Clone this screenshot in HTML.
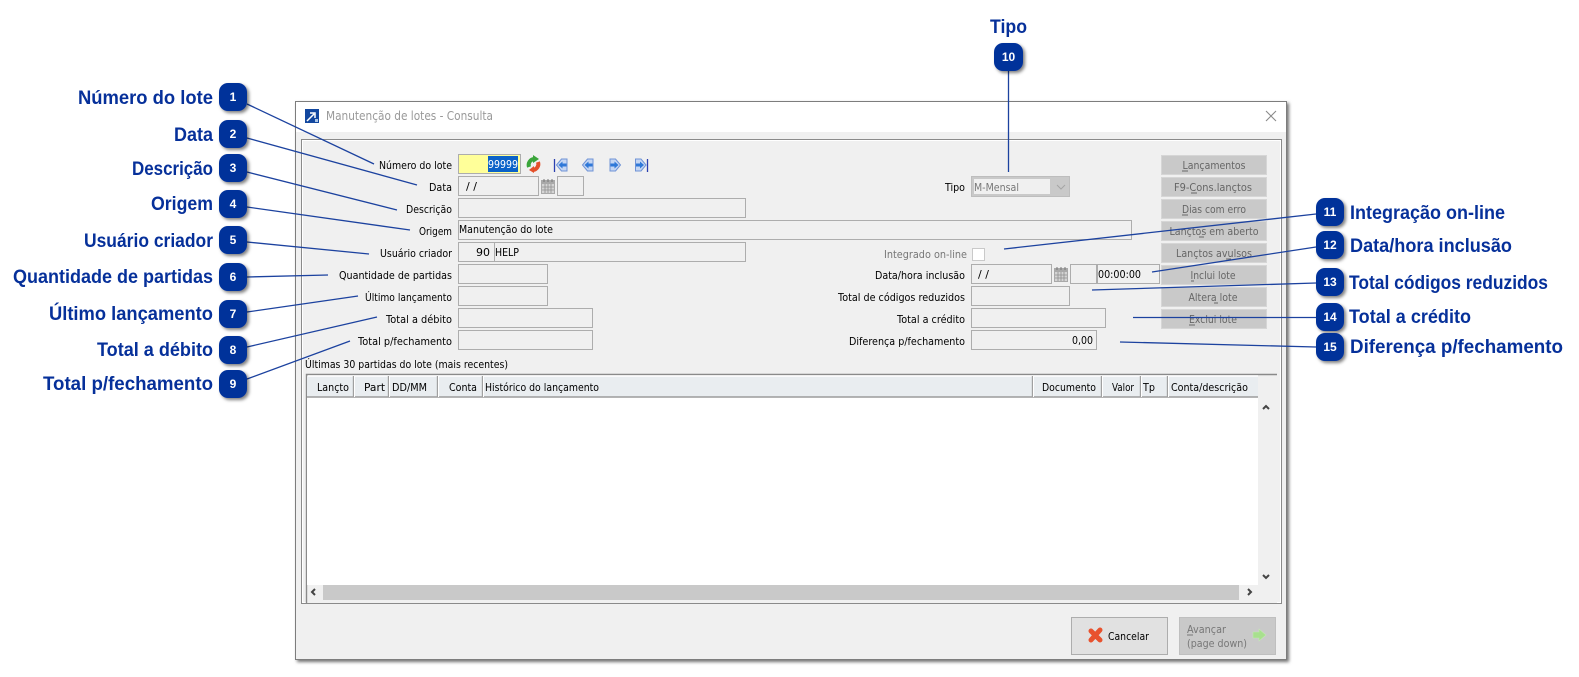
<!DOCTYPE html>
<html><head><meta charset="utf-8"><title>Manutenção de lotes</title>
<style>
html,body{margin:0;padding:0;background:#fff;width:1579px;height:677px;overflow:hidden}
svg{display:block}
.h{font:bold 19px "Liberation Sans",sans-serif;fill:#06309a}
.u{font:11px "DejaVu Sans","Liberation Sans",sans-serif;fill:#000}
.g{fill:#777}
.n{font:bold 12px "Liberation Sans",sans-serif;fill:#fff;text-anchor:middle}
.f{fill:#f0f0f0;stroke:#adadad;stroke-width:1}
.b{fill:#c9c9c9;stroke:#d6d6d6;stroke-width:1}
.l{stroke:#1c429f;stroke-width:1.3;fill:none}
.hs{stroke:#a0a0a0;stroke-width:1.4}
.ao{fill:#c5d6f3;stroke:#6f93d6;stroke-width:1}
.ai{fill:#2f78d8}
</style></head><body>
<svg xmlns="http://www.w3.org/2000/svg" width="1579" height="677" viewBox="0 0 1579 677">
<defs>
<filter id="s" x="-30%" y="-30%" width="170%" height="170%"><feDropShadow dx="2" dy="2" stdDeviation="1.6" flood-color="#000" flood-opacity=".5"/></filter>
<filter id="w" x="-2%" y="-2%" width="104%" height="104%"><feDropShadow dx="2" dy="2" stdDeviation="1.5" flood-color="#000" flood-opacity=".55"/></filter>
<g id="cal"><rect x="0" y="1" width="14" height="14" fill="#a9a9a9"/><rect x="1" y="5" width="12" height="9" fill="#d4d4d4"/><path d="M1 8h12M1 11h12M4 5v9M7 5v9M10 5v9" stroke="#8f8f8f" stroke-width=".8"/><path d="M3 0v3M7 0v3M11 0v3" stroke="#777"/></g>
</defs>

<!-- window -->
<rect x="295.500" y="101.500" width="991" height="558" fill="#f0f0f0" stroke="#7d7d7d" filter="url(#w)"/>
<rect x="296" y="102" width="990" height="30" fill="#fff"/>
<rect x="305" y="109" width="14" height="14" fill="#12479f"/>
<path d="M307 121l7-7M310 113h5v5" stroke="#fff" stroke-width="1.5" fill="none"/>
<path d="M315 119h3v3h-3z" fill="#a9c4e6"/>
<text class="u" x="326" y="120" textLength="167" lengthAdjust="spacingAndGlyphs" style="fill:#999;font-size:12px">Manutenção de lotes - Consulta</text>
<path d="M1266 111l10 10M1276 111l-10 10" stroke="#8a8a8a" stroke-width="1.1"/>

<!-- panel -->
<rect x="301.500" y="139.500" width="980" height="464" fill="#f0f0f0" stroke="#8a8a8a"/>
<rect x="302.500" y="140.500" width="978" height="462" fill="none" stroke="#fff"/>

<!-- left labels -->
<g class="u" text-anchor="end">
<text x="452" y="169" textLength="73" lengthAdjust="spacingAndGlyphs">Número do lote</text>
<text x="452" y="191" textLength="23" lengthAdjust="spacingAndGlyphs">Data</text>
<text x="452" y="213" textLength="46" lengthAdjust="spacingAndGlyphs">Descrição</text>
<text x="452" y="235" textLength="33" lengthAdjust="spacingAndGlyphs">Origem</text>
<text x="452" y="257" textLength="72" lengthAdjust="spacingAndGlyphs">Usuário criador</text>
<text x="452" y="279" textLength="113" lengthAdjust="spacingAndGlyphs">Quantidade de partidas</text>
<text x="452" y="301" textLength="87" lengthAdjust="spacingAndGlyphs">Último lançamento</text>
<text x="452" y="323" textLength="66" lengthAdjust="spacingAndGlyphs">Total a débito</text>
<text x="452" y="345" textLength="94" lengthAdjust="spacingAndGlyphs">Total p/fechamento</text>
</g>

<!-- left fields -->
<rect x="458.500" y="154.500" width="62" height="19" fill="#ffff99" stroke="#adadad"/>
<rect x="488" y="156" width="30" height="16" fill="#0a62c8"/>
<text class="u" x="488" y="168" textLength="30" lengthAdjust="spacingAndGlyphs" style="fill:#fff">99999</text>
<rect class="f" x="458.500" y="176.500" width="80" height="19"/>
<text class="u" x="466" y="190">/ /</text>
<use href="#cal" x="541" y="179"/>
<rect class="f" x="557.500" y="176.500" width="26" height="19"/>
<rect class="f" x="458.500" y="198.500" width="287" height="19"/>
<rect class="f" x="458.500" y="220.500" width="673" height="19"/>
<text class="u" x="459" y="233" textLength="94" lengthAdjust="spacingAndGlyphs">Manutenção do lote</text>
<rect class="f" x="458.500" y="242.500" width="36" height="19"/>
<rect class="f" x="494.500" y="242.500" width="251" height="19"/>
<text class="u" x="490" y="256" text-anchor="end">90</text>
<text class="u" x="495" y="256" textLength="24" lengthAdjust="spacingAndGlyphs">HELP</text>
<rect class="f" x="458.500" y="264.500" width="89" height="19"/>
<rect class="f" x="458.500" y="286.500" width="89" height="19"/>
<rect class="f" x="458.500" y="308.500" width="134" height="19"/>
<rect class="f" x="458.500" y="330.500" width="134" height="19"/>

<!-- nav icons -->
<g>
<path d="M529 167a6 6 0 0 1 5-8" fill="none" stroke="#3aa53a" stroke-width="4"/>
<path d="M533 155l6 4-6 4z" fill="#3aa53a"/>
<path d="M538 162a6 6 0 0 1-5 8" fill="none" stroke="#e4502a" stroke-width="4"/>
<path d="M534 166l-5 4 5 3z" fill="#e4502a"/>
<path d="M554.500 159v13" stroke="#2a3fb0" stroke-width="1.3"/>
<path class="ao" d="M556.500 165l5-6h5.500v12h-5.500z"/><path class="ai" d="M558.500 165l4-3.500v2h4v3h-4v2z"/>
<path class="ao" d="M582.500 165l5-6h5.500v12h-5.500z"/><path class="ai" d="M584.500 165l4-3.500v2h4v3h-4v2z"/>
<path class="ao" d="M620.500 165l-5-6h-5.500v12h5.500z"/><path class="ai" d="M618.500 165l-4-3.500v2h-4v3h4v2z"/>
<path class="ao" d="M646 165l-5-6h-5.500v12h5.500z"/><path class="ai" d="M644 165l-4-3.500v2h-4v3h4v2z"/>
<path d="M647.500 159v13" stroke="#2a3fb0" stroke-width="1.3"/>
</g>

<!-- right labels -->
<g class="u" text-anchor="end">
<text x="965" y="191" textLength="20" lengthAdjust="spacingAndGlyphs">Tipo</text>
<text x="967" y="258" textLength="83" lengthAdjust="spacingAndGlyphs" class="g">Integrado on-line</text>
<text x="965" y="279" textLength="90" lengthAdjust="spacingAndGlyphs">Data/hora inclusão</text>
<text x="965" y="301" textLength="127" lengthAdjust="spacingAndGlyphs">Total de códigos reduzidos</text>
<text x="965" y="323" textLength="68" lengthAdjust="spacingAndGlyphs">Total a crédito</text>
<text x="965" y="345" textLength="116" lengthAdjust="spacingAndGlyphs">Diferença p/fechamento</text>
</g>

<!-- right fields -->
<rect x="971.500" y="176.500" width="98" height="20" fill="#c9c9c9" stroke="#bdbdbd"/>
<rect x="974" y="179" width="76" height="15" fill="#f0f0f0"/>
<text class="u g" x="974" y="191" textLength="45" lengthAdjust="spacingAndGlyphs">M-Mensal</text>
<path d="M1057 185l4 4 4-4" fill="none" stroke="#a5a5a5"/>
<rect x="972.500" y="248.500" width="12" height="12" fill="#fff" stroke="#c9c9c9"/>
<rect class="f" x="971.500" y="264.500" width="80" height="19"/>
<text class="u" x="978" y="278">/ /</text>
<use href="#cal" x="1054" y="267"/>
<rect class="f" x="1070.500" y="264.500" width="26" height="19"/>
<rect class="f" x="1097.500" y="264.500" width="62" height="19"/>
<text class="u" x="1098" y="278" textLength="43" lengthAdjust="spacingAndGlyphs">00:00:00</text>
<rect class="f" x="971.500" y="286.500" width="98" height="19"/>
<rect class="f" x="971.500" y="308.500" width="134" height="19"/>
<rect class="f" x="971.500" y="330.500" width="125" height="19"/>
<text class="u" x="1093" y="344" text-anchor="end" textLength="21" lengthAdjust="spacingAndGlyphs">0,00</text>

<!-- buttons -->
<rect class="b" x="1161.500" y="155.500" width="105" height="19"/>
<rect class="b" x="1161.500" y="177.500" width="105" height="19"/>
<rect class="b" x="1161.500" y="199.500" width="105" height="19"/>
<rect class="b" x="1161.500" y="221.500" width="105" height="19"/>
<rect class="b" x="1161.500" y="243.500" width="105" height="19"/>
<rect class="b" x="1161.500" y="265.500" width="105" height="19"/>
<rect class="b" x="1161.500" y="287.500" width="105" height="19"/>
<rect class="b" x="1161.500" y="309.500" width="105" height="19"/>
<g class="u" text-anchor="middle">
<text style="fill:#666" x="1214" y="169" textLength="63" lengthAdjust="spacingAndGlyphs">Lançamentos</text>
<text style="fill:#666" x="1213" y="191" textLength="78" lengthAdjust="spacingAndGlyphs">F9-Cons.lançtos</text>
<text style="fill:#666" x="1214" y="213" textLength="64" lengthAdjust="spacingAndGlyphs">Dias com erro</text>
<text style="fill:#666" x="1214" y="235" textLength="89" lengthAdjust="spacingAndGlyphs">Lançtos em aberto</text>
<text style="fill:#666" x="1214" y="257" textLength="76" lengthAdjust="spacingAndGlyphs">Lançtos avulsos</text>
<text style="fill:#666" x="1213" y="279" textLength="45" lengthAdjust="spacingAndGlyphs">Inclui lote</text>
<text style="fill:#666" x="1213" y="301" textLength="49" lengthAdjust="spacingAndGlyphs">Altera lote</text>
<text style="fill:#666" x="1213" y="323" textLength="48" lengthAdjust="spacingAndGlyphs">Exclui lote</text>
</g>
<path d="M1182 171h6M1191 193h6M1182 215h6M1199 237h5M1226 259h5M1191 281h3M1214 303h4M1189 325h6" stroke="#666" stroke-width="1"/>

<!-- table -->
<text class="u" x="305" y="368" textLength="203" lengthAdjust="spacingAndGlyphs">Últimas 30 partidas do lote (mais recentes)</text>
<rect x="306" y="374" width="971" height="229" fill="#f0f0f0"/>
<path d="M306.500 603V374.500H1277" fill="none" stroke="#8a8a8a" stroke-width="1.4"/>
<rect x="307" y="397" width="951" height="188" fill="#fff"/>
<rect x="307" y="376" width="951" height="21" fill="#e9edf0"/>
<path d="M308 376h950" stroke="#fff" stroke-width="1.500"/>
<path d="M307 397h951" stroke="#9c9c9c" stroke-width="1.4"/>
<g class="hs">
<path d="M353.500 376v21M388.500 376v21M437.500 376v21M482.500 376v21M1032.500 376v21M1101.500 376v21M1140.500 376v21M1167.500 376v21"/>
</g>
<path d="M354.500 376v21M389.500 376v21M438.500 376v21M483.500 376v21M1033.500 376v21M1102.500 376v21M1141.500 376v21M1168.500 376v21" stroke="#fff"/>
<g class="u">
<text x="317" y="391" textLength="32" lengthAdjust="spacingAndGlyphs">Lançto</text>
<text x="364" y="391" textLength="21" lengthAdjust="spacingAndGlyphs">Part</text>
<text x="392" y="391" textLength="35" lengthAdjust="spacingAndGlyphs">DD/MM</text>
<text x="449" y="391" textLength="28" lengthAdjust="spacingAndGlyphs">Conta</text>
<text x="485" y="391" textLength="114" lengthAdjust="spacingAndGlyphs">Histórico do lançamento</text>
<text x="1042" y="391" textLength="54" lengthAdjust="spacingAndGlyphs">Documento</text>
<text x="1112" y="391" textLength="22" lengthAdjust="spacingAndGlyphs">Valor</text>
<text x="1143" y="391" textLength="12" lengthAdjust="spacingAndGlyphs">Tp</text>
<text x="1171" y="391" textLength="77" lengthAdjust="spacingAndGlyphs">Conta/descrição</text>
</g>
<rect x="323" y="585" width="916" height="15" fill="#c9c9c9"/>
<path d="M1263 409l3-3 3 3M1263 575l3 3 3-3M315 589l-3 3 3 3M1248 589l3 3-3 3" fill="none" stroke="#444" stroke-width="2"/>

<!-- bottom buttons -->
<rect x="1071.500" y="617.500" width="96" height="37" fill="#e1e1e1" stroke="#adadad"/>
<path d="M1091 631l9 9M1100 630l-9 10" stroke="#e8522e" stroke-width="5" stroke-linecap="round"/>
<text class="u" x="1108" y="640" textLength="41" lengthAdjust="spacingAndGlyphs">Cancelar</text>
<rect x="1179.500" y="617.500" width="96" height="37" fill="#c9c9c9" stroke="#bfbfbf"/>
<text class="u" x="1187" y="633" textLength="39" lengthAdjust="spacingAndGlyphs" style="fill:#777">Avançar</text>
<path d="M1187 635h6" stroke="#777"/>
<text class="u" x="1187" y="647" textLength="60" lengthAdjust="spacingAndGlyphs" style="fill:#777">(page down)</text>
<path d="M1253 632h6v-3l7 6-7 6v-3h-6z" fill="#a8e08e" stroke="#c4e8b4" stroke-width=".6"/>

<!-- callout lines -->
<g class="l">
<path d="M247 104L374 164"/>
<path d="M247 138L417 185"/>
<path d="M247 172L397 210"/>
<path d="M247 207L410 230"/>
<path d="M247 242L369 254"/>
<path d="M247 277L328 275"/>
<path d="M247 312L358 296"/>
<path d="M247 347L377 317"/>
<path d="M247 379L350 341"/>
<path d="M1008.500 71V172"/>
<path d="M1004 249L1316 214"/>
<path d="M1152 272L1316 247"/>
<path d="M1092 290L1316 283"/>
<path d="M1133 317.500H1316"/>
<path d="M1120 342L1316 347"/>
</g>

<!-- badges -->
<g fill="#00309a" filter="url(#s)">
<rect x="219" y="83" width="28" height="28" rx="9"/>
<rect x="219" y="120" width="28" height="28" rx="9"/>
<rect x="219" y="154" width="28" height="28" rx="9"/>
<rect x="219" y="190" width="28" height="28" rx="9"/>
<rect x="219" y="226" width="28" height="28" rx="9"/>
<rect x="219" y="263" width="28" height="28" rx="9"/>
<rect x="219" y="300" width="28" height="28" rx="9"/>
<rect x="219" y="336" width="28" height="28" rx="9"/>
<rect x="219" y="370" width="28" height="28" rx="9"/>
<rect x="994" y="43" width="29" height="28" rx="9"/>
<rect x="1316" y="198" width="28" height="28" rx="9"/>
<rect x="1316" y="231" width="28" height="28" rx="9"/>
<rect x="1316" y="268" width="28" height="28" rx="9"/>
<rect x="1316" y="303" width="28" height="28" rx="9"/>
<rect x="1316" y="333" width="28" height="28" rx="9"/>
</g>
<g class="n">
<text class="n" x="233" y="101">1</text>
<text class="n" x="233" y="138">2</text>
<text class="n" x="233" y="172">3</text>
<text class="n" x="233" y="208">4</text>
<text class="n" x="233" y="244">5</text>
<text class="n" x="233" y="281">6</text>
<text class="n" x="233" y="318">7</text>
<text class="n" x="233" y="354">8</text>
<text class="n" x="233" y="388">9</text>
<text class="n" x="1008.500" y="61">10</text>
<text class="n" x="1330" y="216">11</text>
<text class="n" x="1330" y="249">12</text>
<text class="n" x="1330" y="286">13</text>
<text class="n" x="1330" y="321">14</text>
<text class="n" x="1330" y="351">15</text>
</g>

<!-- callout headings -->
<g class="h">
<text x="78" y="104" textLength="135" lengthAdjust="spacingAndGlyphs">Número do lote</text>
<text x="174" y="141" textLength="39" lengthAdjust="spacingAndGlyphs">Data</text>
<text x="132" y="175" textLength="81" lengthAdjust="spacingAndGlyphs">Descrição</text>
<text x="151" y="210" textLength="62" lengthAdjust="spacingAndGlyphs">Origem</text>
<text x="84" y="247" textLength="129" lengthAdjust="spacingAndGlyphs">Usuário criador</text>
<text x="13" y="283" textLength="200" lengthAdjust="spacingAndGlyphs">Quantidade de partidas</text>
<text x="49" y="320" textLength="164" lengthAdjust="spacingAndGlyphs">Último lançamento</text>
<text x="97" y="356" textLength="116" lengthAdjust="spacingAndGlyphs">Total a débito</text>
<text x="43" y="390" textLength="170" lengthAdjust="spacingAndGlyphs">Total p/fechamento</text>
<text x="990" y="33" textLength="37" lengthAdjust="spacingAndGlyphs">Tipo</text>
<text x="1350" y="219" textLength="155" lengthAdjust="spacingAndGlyphs">Integração on-line</text>
<text x="1350" y="252" textLength="162" lengthAdjust="spacingAndGlyphs">Data/hora inclusão</text>
<text x="1349" y="289" textLength="199" lengthAdjust="spacingAndGlyphs">Total códigos reduzidos</text>
<text x="1349" y="323" textLength="122" lengthAdjust="spacingAndGlyphs">Total a crédito</text>
<text x="1350" y="353" textLength="213" lengthAdjust="spacingAndGlyphs">Diferença p/fechamento</text>
</g>
</svg>
</body></html>
